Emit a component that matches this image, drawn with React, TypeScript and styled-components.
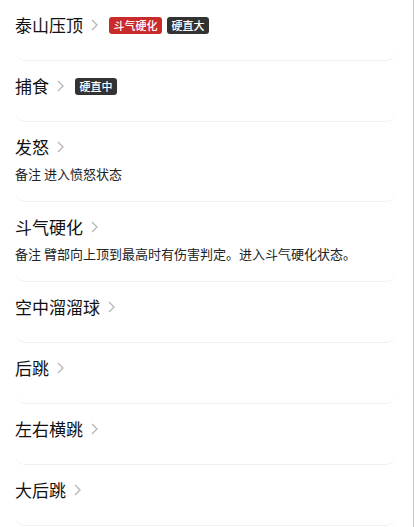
import styled, { createGlobalStyle } from "styled-components";

const GlobalStyle = createGlobalStyle`
  html, body {
    margin: 0;
    padding: 0;
    background: #fff;
  }
  body {
    font-family: "Noto Sans CJK SC", "Noto Sans", sans-serif;
  }
`;

type Tag = { text: string; tone: "red" | "dark" };
type Move = { name: string; tags?: Tag[]; remark?: string };

const moves: Move[] = [
  {
    name: "泰山压顶",
    tags: [
      { text: "斗气硬化", tone: "red" },
      { text: "硬直大", tone: "dark" },
    ],
  },
  { name: "捕食", tags: [{ text: "硬直中", tone: "dark" }] },
  { name: "发怒", remark: "进入愤怒状态" },
  { name: "斗气硬化", remark: "臂部向上顶到最高时有伤害判定。进入斗气硬化状态。" },
  { name: "空中溜溜球" },
  { name: "后跳" },
  { name: "左右横跳" },
  { name: "大后跳" },
];

const Chevron = () => (
  <ChevronIcon viewBox="0 0 7 12" width="7" height="12">
    <path d="M1 1l5 5-5 5" fill="none" stroke="#b5b5b5" strokeWidth="1.3" />
  </ChevronIcon>
);

const App = () => (
  <>
    <GlobalStyle />
    <Page>
      {moves.map((m) => (
        <Card key={m.name}>
          <TitleRow>
            <Title>{m.name}</Title>
            <Chevron />
            {m.tags && (
              <Tags>
                {m.tags.map((t) => (
                  <Badge key={t.text} $tone={t.tone}>
                    {t.text}
                  </Badge>
                ))}
              </Tags>
            )}
          </TitleRow>
          {m.remark && <Remark>备注 {m.remark}</Remark>}
        </Card>
      ))}
    </Page>
  </>
);

const Page = styled.div`
  width: 414px;
  min-height: 527px;
  box-sizing: border-box;
  border-right: 1px solid #c9c9c9;
  overflow: hidden;
`;

const Card = styled.div`
  margin: 0 17px 0 15px;
  padding: 13px 0 18px;
  border-bottom: 1px solid #f0f0f0;
  border-radius: 10px;
`;

const TitleRow = styled.div`
  display: flex;
  align-items: center;
  height: 24px;
  margin-bottom: 5px;
`;

const Title = styled.span`
  font-size: 17px;
  line-height: 24px;
  color: #111;
`;

const ChevronIcon = styled.svg`
  margin-left: 8px;
  flex-shrink: 0;
`;

const Tags = styled.div`
  display: flex;
  gap: 5px;
  margin-left: 11px;
`;

const Badge = styled.span<{ $tone: "red" | "dark" }>`
  display: inline-flex;
  align-items: center;
  height: 17px;
  padding: 0 4.5px;
  border-radius: 3px;
  font-size: 11px;
  font-weight: 500;
  color: #fff;
  background: ${(p) => (p.$tone === "red" ? "#c92a2a" : "#333333")};
`;

const Remark = styled.div`
  font-size: 13px;
  line-height: 19px;
  color: #222;
`;

export default App;
